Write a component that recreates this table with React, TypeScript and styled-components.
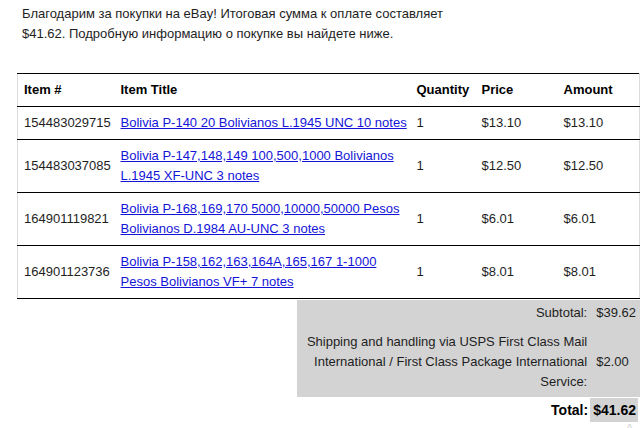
import React from 'react';
import styled, { createGlobalStyle } from 'styled-components';

const GlobalStyle = createGlobalStyle`
  html, body {
    margin: 0;
    padding: 0;
    background: #fff;
  }
  body {
    font-family: "Liberation Sans", Arial, sans-serif;
    font-size: 13px;
    color: #1e1e1e;
    overflow: hidden;
  }
`;

const Page = styled.div`
  position: relative;
  width: 640px;
  height: 428px;
  overflow: hidden;
`;

const Intro = styled.p`
  margin: 0;
  padding: 4px 0 0 22px;
  width: 421px;
  line-height: 20px;
  text-align: justify;
`;

const Orders = styled.table`
  margin: 29px 0 0 17px;
  width: 623px;
  table-layout: fixed;
  border-collapse: collapse;
  border-top: 1px solid #000;
  border-left: 1px solid #dcdcdc;
  border-right: 1px solid #dcdcdc;
`;

const HeadCell = styled.th`
  text-align: left;
  font-weight: bold;
  color: #000;
  padding: 6px 0 6px 6px;
  line-height: 20px;
  border-bottom: 1px solid #000;
`;

const Cell = styled.td`
  padding: 6px 0 6px 6px;
  line-height: 20px;
  vertical-align: middle;
  border-bottom: 1px solid #000;
`;

const ItemLink = styled.a`
  color: #1414d8;
  text-decoration: underline;
`;

const Summary = styled.div`
  display: flex;
  flex-direction: column;
  align-items: flex-end;
  margin-top: 1px;
`;

const Charges = styled.div`
  width: 343px;
  background: #d3d3d3;
  display: grid;
  grid-template-columns: 1fr auto;
  column-gap: 9px;
  row-gap: 9px;
  padding: 3px 4px 5px 6px;
  box-sizing: border-box;
  line-height: 20px;
  align-items: center;
`;

const ChargeLabel = styled.div`
  text-align: right;
`;

const ChargeValue = styled.div`
  text-align: left;
`;

const TotalRow = styled.div`
  display: flex;
  align-items: center;
  gap: 2px;
  margin-top: 1px;
  margin-right: 2px;
  font-weight: bold;
  font-size: 14px;
  color: #000;
`;

const TotalValue = styled.span`
  background: #d3d3d3;
  padding: 2px 2px 2px 3px;
  line-height: 20px;
`;

const ScrollHint = styled.span`
  position: absolute;
  right: 8px;
  bottom: -6px;
  font-size: 10px;
  color: #c8c8c8;
`;

interface Item {
  id: string;
  title: string;
  qty: number;
  price: string;
  amount: string;
}

const items: Item[] = [
  { id: '154483029715', title: 'Bolivia P-140 20 Bolivianos L.1945 UNC 10 notes', qty: 1, price: '$13.10', amount: '$13.10' },
  { id: '154483037085', title: 'Bolivia P-147,148,149 100,500,1000 Bolivianos L.1945 XF-UNC 3 notes', qty: 1, price: '$12.50', amount: '$12.50' },
  { id: '164901119821', title: 'Bolivia P-168,169,170 5000,10000,50000 Pesos Bolivianos D.1984 AU-UNC 3 notes', qty: 1, price: '$6.01', amount: '$6.01' },
  { id: '164901123736', title: 'Bolivia P-158,162,163,164A,165,167 1-1000 Pesos Bolivianos VF+ 7 notes', qty: 1, price: '$8.01', amount: '$8.01' },
];

const App: React.FC = () => {
  return (
    <Page>
      <GlobalStyle />
      <Intro>
        Благодарим за покупки на eBay! Итоговая сумма к оплате составляет $41.62. Подробную информацию о покупке вы найдете ниже.
      </Intro>
      <Orders>
        <colgroup>
          <col style={{ width: 97 }} />
          <col style={{ width: 296 }} />
          <col style={{ width: 65 }} />
          <col style={{ width: 82 }} />
          <col />
        </colgroup>
        <thead>
          <tr>
            <HeadCell>Item #</HeadCell>
            <HeadCell>Item Title</HeadCell>
            <HeadCell>Quantity</HeadCell>
            <HeadCell>Price</HeadCell>
            <HeadCell>Amount</HeadCell>
          </tr>
        </thead>
        <tbody>
          {items.map((item) => (
            <tr key={item.id}>
              <Cell>{item.id}</Cell>
              <Cell>
                <ItemLink href="#">{item.title}</ItemLink>
              </Cell>
              <Cell>{item.qty}</Cell>
              <Cell>{item.price}</Cell>
              <Cell>{item.amount}</Cell>
            </tr>
          ))}
        </tbody>
      </Orders>
      <Summary>
        <Charges>
          <ChargeLabel>Subtotal:</ChargeLabel>
          <ChargeValue>$39.62</ChargeValue>
          <ChargeLabel>
            Shipping and handling via USPS First Class Mail International / First Class Package International Service:
          </ChargeLabel>
          <ChargeValue>$2.00</ChargeValue>
        </Charges>
        <TotalRow>
          <span>Total:</span>
          <TotalValue>$41.62</TotalValue>
        </TotalRow>
      </Summary>
      <ScrollHint>^</ScrollHint>
    </Page>
  );
};

export default App;
